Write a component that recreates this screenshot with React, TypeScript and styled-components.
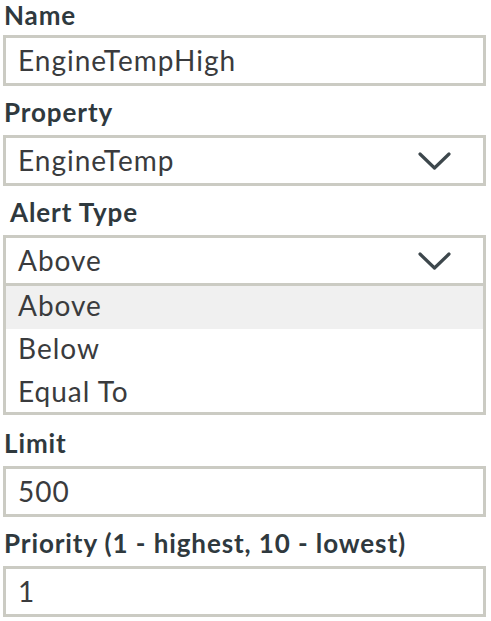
import React from "react"
import styled, { createGlobalStyle } from "styled-components"

const GlobalStyle = createGlobalStyle`
	html, body {
		margin: 0;
		padding: 0;
		background: #ffffff;
	}
	body {
		font-family: Lato, "DejaVu Sans", sans-serif;
	}
`

const Chevron = () => (
	<svg width="33" height="19" viewBox="0 0 33 19" fill="none">
		<path d="M2 2 L16.5 16 L31 2" stroke="#3d474c" strokeWidth="3.2" strokeLinecap="round" strokeLinejoin="round" />
	</svg>
)

const alertTypes = ["Above", "Below", "Equal To"]

const App = () => {
	return (
		<>
			<GlobalStyle />
			<Form>
				<Group $first>
					<Label>Name</Label>
					<Field>EngineTempHigh</Field>
				</Group>
				<Group>
					<Label>Property</Label>
					<Field>
						<span>EngineTemp</span>
						<Chevron />
					</Field>
				</Group>
				<Group>
					<Label $indent>Alert Type</Label>
					<Field>
						<span>Above</span>
						<Chevron />
					</Field>
					<OptionList>
						{alertTypes.map((t, i) => (
							<Option key={t} $active={i === 0}>
								{t}
							</Option>
						))}
					</OptionList>
				</Group>
				<Group $after>
					<Label>Limit</Label>
					<Field>500</Field>
				</Group>
				<Group>
					<Label>Priority (1 - highest, 10 - lowest)</Label>
					<Field>1</Field>
				</Group>
			</Form>
		</>
	)
}

export default App

const Form = styled.form`
	display: flex;
	flex-direction: column;
	padding: 0 5px 0 3px;
`

const Group = styled.div<{ $first?: boolean; $after?: boolean }>`
	display: flex;
	flex-direction: column;
	margin-top: ${({ $first, $after }) => ($first ? "0" : $after ? "13px" : "11px")};
`

const Label = styled.label<{ $indent?: boolean }>`
	display: block;
	font-size: 26px;
	font-weight: 700;
	letter-spacing: 0.9px;
	line-height: 31px;
	color: #2f393e;
	padding-left: ${({ $indent }) => ($indent ? "7px" : "1px")};
	margin-bottom: 7px;

	${Group}:first-child & {
		margin-bottom: 4px;
	}
`

const Field = styled.div`
	display: flex;
	align-items: center;
	justify-content: space-between;
	box-sizing: border-box;
	height: 51px;
	border: 3px solid #cbcbc3;
	padding: 0 32px 0 12px;
	font-size: 28px;
	letter-spacing: 1px;
	line-height: 45px;
	color: #3a3b3d;
	background: #ffffff;

	svg {
		margin-top: 2px;
		flex-shrink: 0;
	}
`

const OptionList = styled.div`
	box-sizing: border-box;
	height: 129px;
	border: 3px solid #cbcbc3;
	border-top: none;
	overflow: hidden;
`

const Option = styled.div<{ $active?: boolean }>`
	height: 43px;
	padding-left: 12px;
	font-size: 28px;
	letter-spacing: 1px;
	line-height: 38px;
	color: #3a3b3d;
	background: ${({ $active }) => ($active ? "#f0f0f0" : "#ffffff")};
`
